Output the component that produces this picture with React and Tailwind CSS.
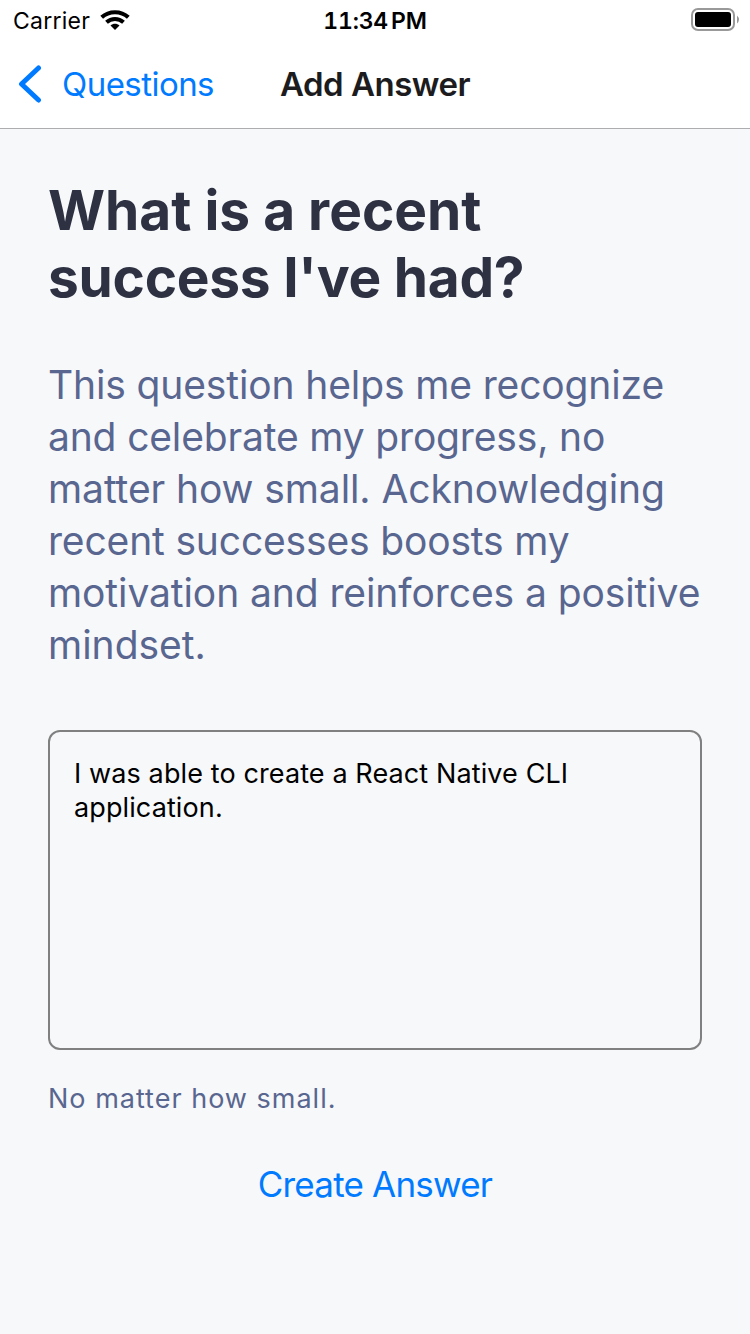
const T = ({ className = "", children }) => (
  <div className={"whitespace-nowrap " + className}>{children}</div>
);

export default function App() {
  return (
    <div className="flex h-[1334px] w-[750px] flex-col overflow-hidden bg-[#f7f8fa] font-['Inter',sans-serif]">
      <header className="h-[129px] shrink-0 border-b border-[#adadaf] bg-white">
        <div className="grid h-10 grid-cols-3 items-center pl-[13px] pr-[11px] text-black">
          <div className="flex items-center gap-[10px]">
            <T className="pt-px text-[23px] leading-[32px] tracking-[0.25px]">Carrier</T>
            <svg width="30" height="22" viewBox="0 0 30 22" fill="none" stroke="#000" strokeWidth="4">
              <path d="M1.700 8.300C9 1.400 21 1.400 28.300 8.300" />
              <path d="M6.500 13.300C11.300 8.900 18.700 8.900 23.500 13.300" />
              <path d="M15 21l-4.500-4.400c2.500-2.400 6.500-2.400 9 0z" fill="#000" stroke="none" />
            </svg>
          </div>
          <T className="pr-0.5 pt-px text-center text-[23px] font-semibold leading-[32px] tracking-[-0.2px] tabular-nums [word-spacing:-3px]">11:34 PM</T>
          <svg className="justify-self-end" width="48" height="24" viewBox="0 0 48 24">
            <rect x="1" y="1" width="42" height="21" rx="6" fill="none" stroke="#999" strokeWidth="2" />
            <rect x="4" y="4" width="36" height="15" rx="3" />
            <path d="M46 7.500q4 4 0 8z" fill="#999" />
          </svg>
        </div>
        <div className="flex h-[88px] items-center pl-[18px]">
          <svg width="24" height="38" viewBox="0 0 24 38" fill="none" stroke="#007aff" strokeWidth="5" strokeLinecap="round" strokeLinejoin="round">
            <path d="M20.500 3L3.500 19l17 16" />
          </svg>
          <T className="ml-5 w-[218px] pt-0.5 text-[33px] tracking-[-0.55px] text-[#007aff]">Questions</T>
          <T className="pt-0.5 text-[33px] font-semibold tracking-[-0.5px] text-[#1c1c1e]">Add Answer</T>
        </div>
      </header>
      <main className="flex flex-col px-12 pt-[48px]">
        <h1 className="text-[55px] font-bold leading-[67px] text-[#2d3142]">
          <T>What is a recent</T>
          <T className="tracking-[-0.25px]">success I've had?</T>
        </h1>
        <div className="mt-[48px] text-[39px] leading-[52px] text-[#586690]">
          <T className="tracking-[-0.13px]">This question helps me recognize</T>
          <T className="tracking-[-0.16px]">and celebrate my progress, no</T>
          <T className="tracking-[-0.09px]">matter how small. Acknowledging</T>
          <T className="tracking-[-0.16px]">recent successes boosts my</T>
          <T className="tracking-[-0.09px]">motivation and reinforces a positive</T>
          <T>mindset.</T>
        </div>
        <div className="mt-[59px] h-[320px] rounded-xl border-2 border-[#808080] px-6 pt-[25px] text-[27px] leading-[34px] tracking-[0.11px] text-black">
          <T>I was able to create a React Native CLI</T>
          <T>application.</T>
        </div>
        <T className="mt-8 text-[27px] leading-[34px] tracking-[1px] text-[#586690]">No matter how small.</T>
        <T className="mt-[47px] text-center text-[35px] leading-[42px] tracking-[-0.8px] text-[#007aff]">Create Answer</T>
      </main>
    </div>
  );
}
